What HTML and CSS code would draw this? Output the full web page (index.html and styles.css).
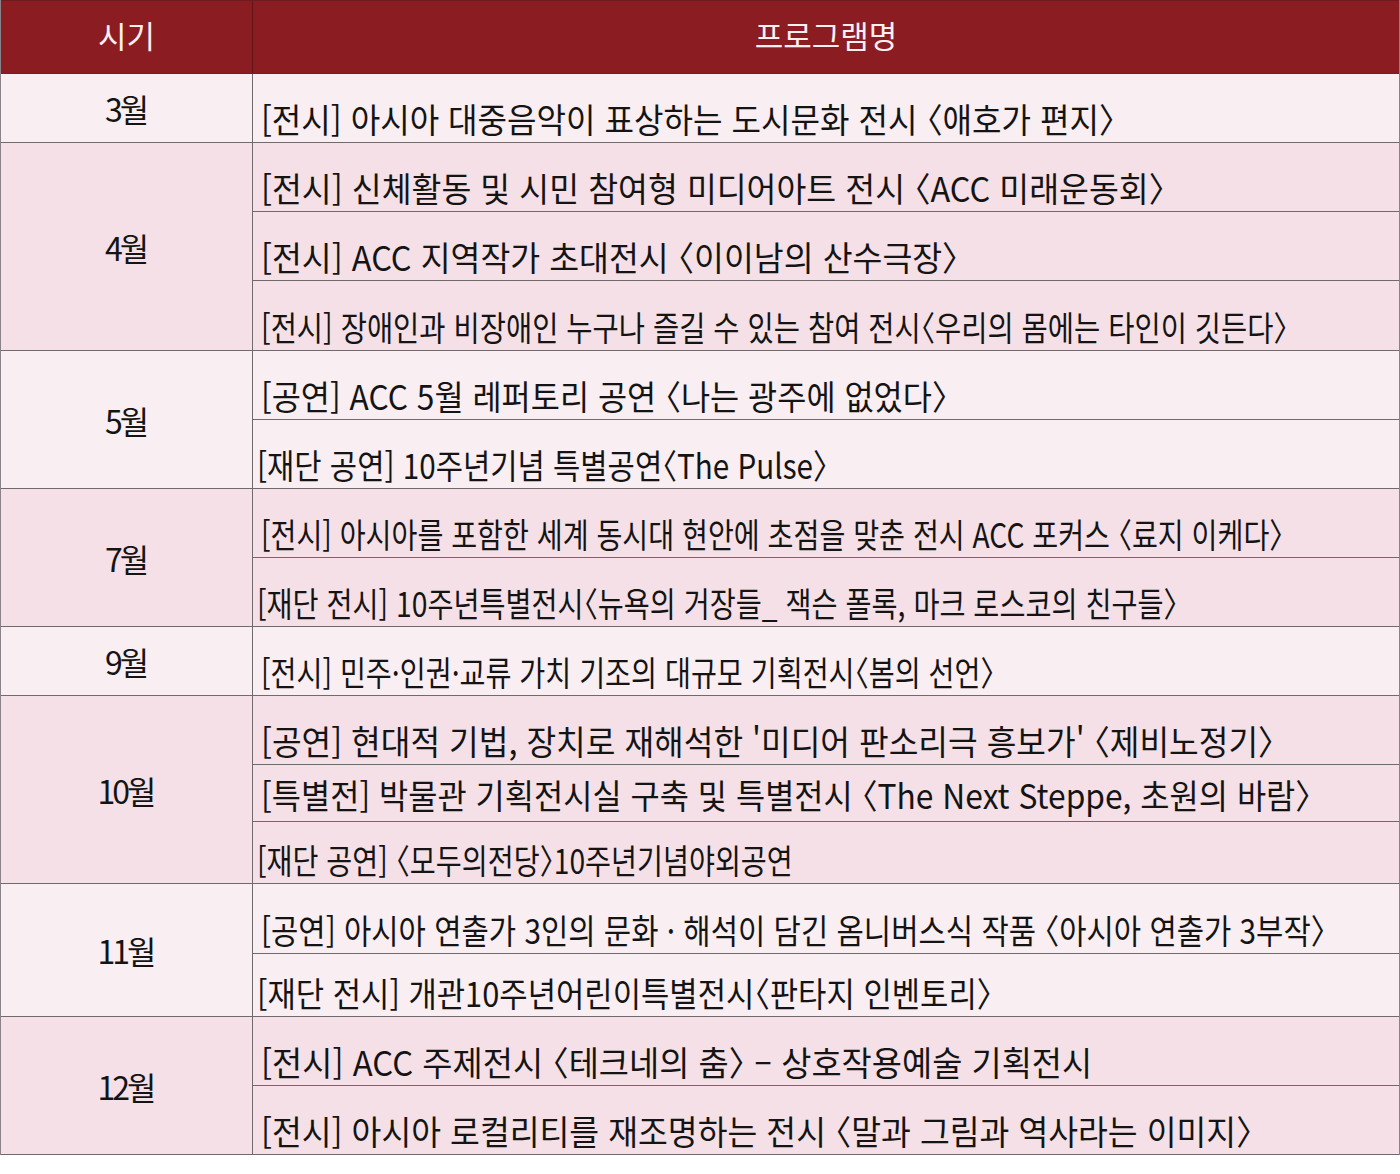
FILE: index.html
```html
<!DOCTYPE html>
<html lang="ko">
<head>
<meta charset="utf-8">
<title>프로그램</title>
<link rel="stylesheet" href="styles.css">
</head>
<body>
<div class="table">
  <div class="head">
    <div class="hcell hmonth">시기</div>
    <div class="hcell hprog">프로그램명</div>
  </div>

  <div class="group light">
    <div class="month">3월</div>
    <div class="progs">
      <div class="item h69"><span class="t r1">[전시] 아시아 대중음악이 표상하는 도시문화 전시 〈애호가 편지〉</span></div>
    </div>
  </div>

  <div class="group dark">
    <div class="month">4월</div>
    <div class="progs">
      <div class="item h69"><span class="t r2">[전시] 신체활동 및 시민 참여형 미디어아트 전시 〈ACC 미래운동회〉</span></div>
      <div class="item h69"><span class="t r3">[전시] ACC 지역작가 초대전시 〈이이남의 산수극장〉</span></div>
      <div class="item h70"><span class="t r4">[전시] 장애인과 비장애인 누구나 즐길 수 있는 참여 전시〈우리의 몸에는 타인이 깃든다〉</span></div>
    </div>
  </div>

  <div class="group light">
    <div class="month">5월</div>
    <div class="progs">
      <div class="item h69"><span class="t r5">[공연] ACC 5월 레퍼토리 공연 〈나는 광주에 없었다〉</span></div>
      <div class="item h69 fd"><span class="t r6">[재단 공연] 10주년기념 특별공연〈The Pulse〉</span></div>
    </div>
  </div>

  <div class="group dark">
    <div class="month">7월</div>
    <div class="progs">
      <div class="item h69"><span class="t r7">[전시] 아시아를 포함한 세계 동시대 현안에 초점을 맞춘 전시 ACC 포커스 〈료지 이케다〉</span></div>
      <div class="item h69 fd"><span class="t r8">[재단 전시] 10주년특별전시〈뉴욕의 거장들_ 잭슨 폴록, 마크 로스코의 친구들〉</span></div>
    </div>
  </div>

  <div class="group light">
    <div class="month">9월</div>
    <div class="progs">
      <div class="item h69"><span class="t r9">[전시] 민주·인권·교류 가치 기조의 대규모 기획전시〈봄의 선언〉</span></div>
    </div>
  </div>

  <div class="group dark">
    <div class="month">10월</div>
    <div class="progs">
      <div class="item h69"><span class="t r10">[공연] 현대적 기법, 장치로 재해석한 '미디어 판소리극 흥보가' 〈제비노정기〉</span></div>
      <div class="item h57"><span class="t r11">[특별전] 박물관 기획전시실 구축 및 특별전시 〈The Next Steppe, 초원의 바람〉</span></div>
      <div class="item h62 fd"><span class="t r12">[재단 공연] 〈모두의전당〉10주년기념야외공연</span></div>
    </div>
  </div>

  <div class="group light">
    <div class="month">11월</div>
    <div class="progs">
      <div class="item h70"><span class="t r13">[공연] 아시아 연출가 3인의 문화 · 해석이 담긴 옴니버스식 작품 〈아시아 연출가 3부작〉</span></div>
      <div class="item h63 fd"><span class="t r14">[재단 전시] 개관10주년어린이특별전시〈판타지 인벤토리〉</span></div>
    </div>
  </div>

  <div class="group dark">
    <div class="month">12월</div>
    <div class="progs">
      <div class="item h69"><span class="t r15">[전시] ACC 주제전시 〈테크네의 춤〉 – 상호작용예술 기획전시</span></div>
      <div class="item h69"><span class="t r16">[전시] 아시아 로컬리티를 재조명하는 전시 〈말과 그림과 역사라는 이미지〉</span></div>
    </div>
  </div>
</div>
</body>
</html>
```

FILE: styles.css
```css
html, body {
  margin: 0;
  padding: 0;
  background: #ffffff;
}

body {
  font-family: "Noto Sans CJK KR", "Noto Sans", sans-serif;
  color: #141414;
  overflow: hidden;
}

.table {
  width: 1400px;
  box-sizing: border-box;
  border-left: 1px solid #8a8286;
  border-right: 1px solid #8a8286;
  overflow: hidden;
}

.head {
  display: grid;
  grid-template-columns: 252px minmax(0, 1fr);
  height: 74px;
  box-sizing: border-box;
  background: #8b1c21;
  border-top: 1px solid #6e1a1e;
  border-bottom: 1px solid #5a2a2c;
}

.hcell {
  display: flex;
  align-items: center;
  justify-content: center;
  color: #fbeff0;
  font-size: 31px;
  font-weight: 400;
  padding-bottom: 5px;
}

.hmonth {
  border-right: 1px solid #5e1518;
}

.group {
  display: grid;
  grid-template-columns: 252px minmax(0, 1fr);
  border-bottom: 1px solid #6f6a6c;
}

.light { background: #f9eef2; }
.dark { background: #f4e0e6; }

.month {
  display: flex;
  align-items: center;
  justify-content: center;
  border-right: 1px solid #6f6a6c;
  font-size: 32px;
  letter-spacing: -3px;
  padding-right: 2px;
}

.progs {
  display: flex;
  flex-direction: column;
  min-width: 0;
  overflow: hidden;
}

.item {
  display: flex;
  align-items: flex-end;
  box-sizing: border-box;
  min-width: 0;
  padding-left: 8px;
  padding-bottom: 6px;
  border-bottom: 1px solid #6f6a6c;
  white-space: nowrap;
  overflow: hidden;
}

.item:last-child {
  border-bottom: none;
}

.item.fd { padding-left: 4px; }

.h69 { height: 69px; }
.h70 { height: 70px; }
.h57 { height: 57px; padding-bottom: 9px; }
.h62 { height: 62px; }
.h63 { height: 63px; }
.item:last-child.h69 { height: 68px; }
.item:last-child.h70 { height: 69px; }
.item:last-child.h62 { height: 61px; }
.item:last-child.h63 { height: 62px; }

.t {
  display: inline-block;
  flex: none;
  font-size: 34px;
  line-height: 1;
  font-feature-settings: "halt";
  transform-origin: left bottom;
}

.r1 { transform: scaleX(0.943); }
.r2 { transform: scaleX(0.955); }
.r3 { transform: scaleX(0.955); }
.r4 { transform: scaleX(0.838); }
.r5 { transform: scaleX(0.932); }
.r6 { transform: scaleX(0.872); }
.r7 { transform: scaleX(0.828); }
.r8 { transform: scaleX(0.832); }
.r9 { transform: scaleX(0.83); }
.r10 { transform: scaleX(0.948); }
.r11 { transform: scaleX(0.934); }
.r12 { transform: scaleX(0.83); }
.r13 { transform: scaleX(0.873); }
.r14 { transform: scaleX(0.906); }
.r15 { transform: scaleX(0.965); }
.r16 { transform: scaleX(0.953); }
```
